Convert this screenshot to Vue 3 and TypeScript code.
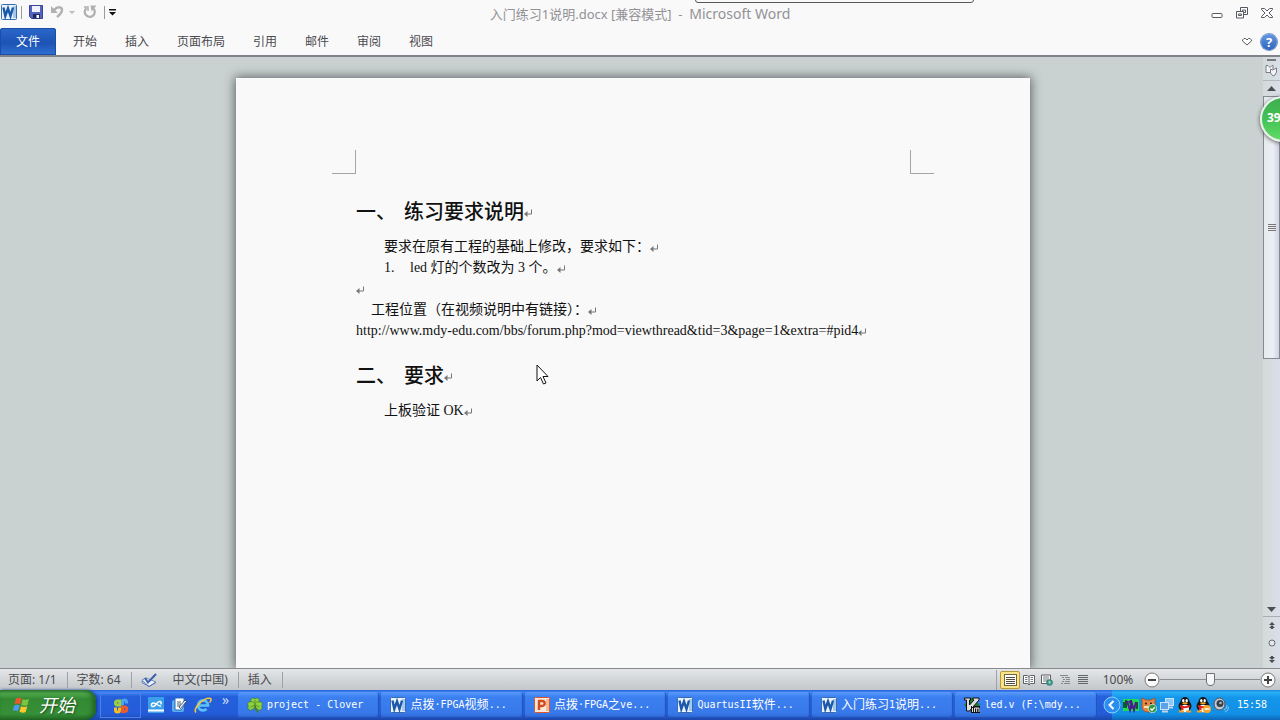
<script setup lang="ts">
interface Task {
  icon: 'clover' | 'word' | 'ppt' | 'vim'
  label: string
}
interface Run {
  text: string
  latin: boolean
}

const tabs: string[] = ['开始', '插入', '页面布局', '引用', '邮件', '审阅', '视图']

const tasks: Task[] = [
  { icon: 'clover', label: 'project - Clover' },
  { icon: 'word', label: '点拨·FPGA视频...' },
  { icon: 'ppt', label: '点拨·FPGA之ve...' },
  { icon: 'word', label: 'QuartusII软件...' },
  { icon: 'word', label: '入门练习1说明...' },
  { icon: 'vim', label: 'led.v (F:\\mdy...' },
]

// Splits a label into Latin and Chinese runs so each gets its own face and size.
function runs(label: string): Run[] {
  const parts = label.match(/[\x20-\xff]+|[^\x20-\xff]+/g) ?? []
  return parts.map((text) => ({ text, latin: text.charCodeAt(0) < 256 }))
}
</script>

<template>
  <div class="desktop">
    <svg class="defs" aria-hidden="true">
      <defs>
        <symbol id="i-return" viewBox="0 0 9 9">
          <path d="M7.5 0.5v4.5H2" fill="none" stroke="#777" />
          <path d="M0 5l3.5-3v6z" fill="#777" />
        </symbol>
        <symbol id="i-word" viewBox="0 0 16 16">
          <rect x="0.5" y="0.5" width="15" height="15" rx="1" fill="#e9f3fc" stroke="#3a6cae" />
          <rect x="12" y="2" width="3" height="12" fill="#a5c9ea" />
          <path d="M2.5 3.500l1.800 8.500 2.700-7.500 2.500 7.500 2.500-8.500" fill="none" stroke="#1c58ab" stroke-width="2.400" />
        </symbol>
        <symbol id="i-ppt" viewBox="0 0 16 16">
          <rect x="0.5" y="0.5" width="15" height="15" rx="1" fill="#fbe6da" stroke="#d9582a" />
          <rect x="12" y="2" width="3" height="12" fill="#f3b697" />
          <path d="M5 13V4h3.2a2.5 2.5 0 0 1 0 5H5" fill="none" stroke="#d24a1b" stroke-width="2.4" />
        </symbol>
        <symbol id="i-clover" viewBox="0 0 16 16">
          <g fill="#8fd040" stroke="#2d6a16" stroke-width="0.5">
            <path d="M8 8C5 8 3.500 7 4 4.500C3 2 6 -0.500 8 2C10 -0.500 13 2 12 4.500C12 7 10 8 8 8z" />
            <path d="M8 8C8 5 6 4.500 4 5C1.500 4 -0.500 7 1.500 9C-0.500 11.500 3 14.500 5 12.500C7 12 8 10 8 8z" />
            <path d="M8 8C8 5 10 4.500 12 5C14.500 4 16.500 7 14.500 9C16.500 11.500 13 14.500 11 12.500C9 12 8 10 8 8z" />
          </g>
          <path d="M8 8c0 3 .5 5 3 7.500" fill="none" stroke="#477f20" stroke-width="1.500" />
          <path d="M8 3v5L3.500 10M8 8l4.500 2" fill="none" stroke="#5c9a2a" />
        </symbol>
        <symbol id="i-vim" viewBox="0 0 16 16">
          <path d="M8 0l8 8-8 8-8-8z" fill="#1b7a36" />
          <path d="M0.500 1h6v2h-1v5l4.500-5h-1V1h6v2L5.500 14H2.500V3h-2z" fill="#dedede" stroke="#111" />
          <path d="M7 9h9v7H7z" fill="#111" />
          <path d="M8.500 11v4M10.500 15v-4h4.500v4M12.700 11v4" fill="none" stroke="#e6e6e6" />
          <path d="M8 9h1v1H8z" fill="#e6e6e6" />
        </symbol>
        <symbol id="i-penguin" viewBox="0 0 16 16">
          <ellipse cx="8" cy="9" rx="6.500" ry="6" fill="#161616" />
          <ellipse cx="8" cy="5" rx="4.500" ry="5" fill="#161616" />
          <ellipse cx="8" cy="11.500" rx="4" ry="3.800" fill="#fff" />
          <ellipse cx="6.300" cy="3.700" rx="1.200" ry="1.600" fill="#fff" />
          <ellipse cx="9.700" cy="3.700" rx="1.200" ry="1.600" fill="#fff" />
          <ellipse cx="8" cy="6.300" rx="2.800" ry="1" fill="#f6a21a" />
          <path d="M3 8c3 1.500 7 1.500 10 0v2c-3 1.500-7 1.500-10 0z" fill="#e2231a" />
          <path d="M4 9.500h2.500V13H4z" fill="#e2231a" />
          <path d="M2 14.500h5M9 14.500h5" stroke="#f6a21a" stroke-width="2" />
        </symbol>
      </defs>
    </svg>

    <header class="ribbon">
      <div class="titlebar">
        <div class="quick">
          <svg class="i16" aria-hidden="true"><use href="#i-word" /></svg>
          <span class="bar"></span>
          <button type="button" aria-label="保存">
            <svg viewBox="0 0 14 14" width="14" height="14">
              <path d="M0.500 0.500h13v13h-11l-2-2z" fill="#5463bd" stroke="#39479b" />
              <rect x="3" y="1" width="8" height="6" fill="#f0f3ff" />
              <rect x="4" y="9" width="7" height="4.500" fill="#20285f" />
              <rect x="7.500" y="10" width="2.500" height="3" fill="#fff" />
            </svg>
          </button>
          <button type="button" class="undo" aria-label="撤消">
            <svg viewBox="0 0 24 14" width="24" height="14">
              <path d="M3 5c4-4 8-3 8 0 0 3-3 5-5 7" fill="none" stroke="#b1b1b1" stroke-width="2.500" />
              <path d="M0 1v7h7z" fill="#b1b1b1" />
              <path d="M18 6h6l-3 3z" fill="#bbb" />
            </svg>
          </button>
          <button type="button" class="redo" aria-label="恢复">
            <svg viewBox="0 0 14 14" width="14" height="14">
              <path d="M3.500 3a5 5 0 1 0 7 0.500" fill="none" stroke="#b1b1b1" stroke-width="2.300" />
              <path d="M7.500 0.500h6l-5 6z" fill="#b1b1b1" />
              <path d="M1 2h4v4" fill="none" stroke="#b1b1b1" stroke-width="1.500" />
            </svg>
          </button>
          <span class="bar"></span>
          <button type="button" class="more" aria-label="自定义快速访问工具栏">
            <svg viewBox="0 0 7 7" width="7" height="7"><path d="M0 0h7v1.500H0zM0 3h7L3.500 6.500z" fill="#111" /></svg>
          </button>
        </div>
        <h1 class="title">入门练习1说明.docx [兼容模式] &nbsp;-&nbsp; <span class="app">Microsoft Word</span></h1>
        <div class="winctl">
          <button type="button" aria-label="最小化">
            <svg viewBox="0 0 12 12" width="12" height="12"><rect x="1" y="6.500" width="10" height="4" rx="1" fill="#fff" stroke="#555763" /></svg>
          </button>
          <button type="button" aria-label="还原">
            <svg viewBox="0 0 12 12" width="12" height="12" fill="#fff" stroke="#555763">
              <path d="M4.500 0.500h7v7h-7z" /><path d="M6.500 3h3v2.500h-3z" /><path d="M0.500 4.500h7v6.500h-7z" /><path d="M2.500 7h3v1.500h-3z" />
            </svg>
          </button>
          <button type="button" aria-label="关闭">
            <svg viewBox="0 0 12 12" width="12" height="12"><path d="M0.500 1.500h3L6 4l2.500-2.500h3v1L8 6l3.500 3.500v1h-3L6 8l-2.500 2.500h-3v-1L4 6 0.500 2.500z" fill="#fff" stroke="#555763" /></svg>
          </button>
        </div>
        <div class="edge"></div>
      </div>
      <nav class="tabs">
        <button type="button" class="file">文件</button>
        <button v-for="t in tabs" :key="t" type="button" class="tab">{{ t }}</button>
        <span class="grow"></span>
        <button type="button" class="fold" aria-label="展开功能区">
          <svg viewBox="0 0 10 8" width="10" height="8"><path d="M0.500 2L2 0.500h1.500L5 2l1.500-1.500H8L9.500 2v1L5 7 0.500 3z" fill="#fff" stroke="#555763" /></svg>
        </button>
        <button type="button" class="help" aria-label="帮助">?</button>
      </nav>
    </header>

    <main class="workspace">
      <div class="canvas">
        <article class="page">
          <div class="corners"><span class="corner left"></span><span class="corner right"></span></div>
          <div class="text">
            <h2>一、<span class="gap"></span>练习要求说明<svg class="ret"><use href="#i-return" /></svg></h2>
            <p class="in2">要求在原有工程的基础上修改，要求如下：<svg class="ret"><use href="#i-return" /></svg></p>
            <p class="in2"><span class="num">1.</span>led 灯的个数改为 3 个。<svg class="ret"><use href="#i-return" /></svg></p>
            <p><svg class="ret"><use href="#i-return" /></svg></p>
            <p class="in1">工程位置（在视频说明中有链接）：<svg class="ret"><use href="#i-return" /></svg></p>
            <p>http://www.mdy-edu.com/bbs/forum.php?mod=viewthread&amp;tid=3&amp;page=1&amp;extra=#pid4<svg class="ret"><use href="#i-return" /></svg></p>
            <h2>二、<span class="gap"></span>要求<svg class="ret"><use href="#i-return" /></svg></h2>
            <p class="in2">上板验证 OK<svg class="ret"><use href="#i-return" /></svg></p>
          </div>
        </article>
      </div>

      <div class="scroll">
        <span class="split"></span>
        <button type="button" class="ruler" aria-label="标尺">
          <svg viewBox="0 0 13 13" width="13" height="13" fill="#f4f4f8" stroke="#7b7e88"><path d="M1 1.500h2l2 2 2-2h1v7H1z" /><path d="M5.500 5l2 1 4-2v4l-1.500 3-2 1-2.500-3z" /></svg>
        </button>
        <button type="button" class="arrow up" aria-label="向上滚动"><svg viewBox="0 0 9 5" width="9" height="5"><path d="M0 5l4.500-5L9 5z" fill="#4c4e57" /></svg></button>
        <div class="track">
          <div class="thumb"><i></i><i></i><i></i><i></i></div>
        </div>
        <button type="button" class="arrow down" aria-label="向下滚动"><svg viewBox="0 0 9 5" width="9" height="5"><path d="M0 0h9L4.500 5z" fill="#4c4e57" /></svg></button>
        <button type="button" class="jump" aria-label="前一页"><svg viewBox="0 0 6 7" width="6" height="7"><path d="M3 0l3 3H0zM3 3l3 3H0zM2 6h2v1H2z" fill="#4c4e57" /></svg></button>
        <button type="button" class="jump" aria-label="选择浏览对象"><svg viewBox="0 0 8 8" width="8" height="8"><circle cx="4" cy="4" r="3" fill="#e6e6ec" stroke="#6a6c74" /></svg></button>
        <button type="button" class="jump" aria-label="下一页"><svg viewBox="0 0 6 7" width="6" height="7"><path d="M2 0h2v1H2zM0 1h6L3 4zM0 4h6L3 7z" fill="#4c4e57" /></svg></button>
      </div>
      <div class="badge">39</div>
      <svg class="pointer" viewBox="0 0 13 21" width="13" height="21" aria-hidden="true">
        <path d="M1 1v16l3.500-3.500L7.500 20l2.500-1-3-6.500h5z" fill="#fff" stroke="#111" />
      </svg>
    </main>

    <footer class="status">
      <span class="cell first">页面: 1/1</span>
      <span class="cell">字数: 64</span>
      <span class="cell proof">
        <svg viewBox="0 0 16 14" width="16" height="14" aria-hidden="true">
          <path d="M1 7l4-2 10 4-7 4.500z" fill="#eef2fb" stroke="#6f88bd" />
          <path d="M1 8v1.500l7 4 7-4" fill="none" stroke="#5876b4" />
          <path d="M4 5l3 4.500L15 1" fill="none" stroke="#3c61ab" stroke-width="2" />
        </svg>
        中文(中国)
      </span>
      <span class="cell">插入</span>
      <span class="grow"></span>
      <div class="views">
        <button type="button" class="on" aria-label="页面视图">
          <svg viewBox="0 0 13 12" width="13" height="12"><rect x="0.500" y="0.500" width="12" height="11" fill="#fff" stroke="#6d6541" /><path d="M2 3.500h9M2 5.500h9M2 7.500h9M2 9.500h9" stroke="#554f3a" /></svg>
        </button>
        <button type="button" aria-label="阅读版式">
          <svg viewBox="0 0 12 12" width="12" height="12"><path d="M0.500 1.500h4L6 2.500l1.500-1h4v8h-4L6 11l-1.500-1.500h-4zM6 2.500v8" fill="#fff" stroke="#5b5f66" /><path d="M2 3.500h2.500M2 5.500h2.500M2 7.500h2.500M7.500 3.500H10M7.500 5.500H10M7.500 7.500H10" stroke="#777" /></svg>
        </button>
        <button type="button" aria-label="Web 版式">
          <svg viewBox="0 0 12 12" width="12" height="12"><path d="M0.500 1h9v8.500h-9z" fill="#fff" stroke="#5b5f66" /><path d="M2 3h6M2 5h6M2 7h4" stroke="#777" /><circle cx="8.500" cy="8.500" r="3.300" fill="#3a8a88" /><path d="M7 7.500l2-1 1 2-1.500 2z" fill="#8fd0a4" /></svg>
        </button>
        <button type="button" aria-label="大纲视图">
          <svg viewBox="0 0 12 12" width="12" height="12"><path d="M1 1.500h8M3 3.500h2M6 3.500h5M4 5.500h2M7 5.500h4M3 7.500h2M6 7.500h5M2 9.500h2M5 9.500h6" stroke="#85878c" /></svg>
        </button>
        <button type="button" aria-label="草稿">
          <svg viewBox="0 0 12 12" width="12" height="12"><path d="M1 1.500h10M1 3.500h10M1 5.500h10M1 7.500h10M1 9.500h10" stroke="#63656a" /></svg>
        </button>
      </div>
      <button type="button" class="percent">100%</button>
      <button type="button" class="round" aria-label="缩小"><svg viewBox="0 0 16 16" width="16" height="16"><circle cx="8" cy="8" r="7" fill="#fafafa" stroke="#77797e" /><path d="M4 8h8" stroke="#444" stroke-width="2" /></svg></button>
      <input class="zoom" type="range" min="0" max="100" value="50" aria-label="显示比例" />
      <button type="button" class="round" aria-label="放大"><svg viewBox="0 0 16 16" width="16" height="16"><circle cx="8" cy="8" r="7" fill="#fafafa" stroke="#77797e" /><path d="M4 8h8M8 4v8" stroke="#444" stroke-width="2" /></svg></button>
    </footer>

    <div class="taskbar">
      <button type="button" class="start">
        <svg viewBox="0 0 18 18" width="18" height="18" aria-hidden="true">
          <path d="M3 2.500c2-1.300 4-1 5.500 0L7 8.300c-2-1-4-1-5.500 0z" fill="#f0562b" />
          <path d="M9.700 3c2 1 4 1 6.300 0l-1.500 6c-2 1-4 .8-6.300-.2z" fill="#7cc342" />
          <path d="M1.200 9.500c2-1.200 4-1 5.500 0L5 15.300c-2-1-4-1-5.500 0z" fill="#4b9bf0" />
          <path d="M8 10.200c2 1 4 1 6.200 0l-1.500 5.800c-2 1-4 .8-6.200-.2z" fill="#fbc72c" />
        </svg>
        <span>开始</span>
      </button>
      <div class="pinned">
        <button type="button" aria-label="Office">
          <svg viewBox="0 0 16 16" width="16" height="16" fill="none" stroke-width="3">
            <path d="M7 3H4.500a2 2 0 0 0 0 4H7z" stroke="#9bd13f" /><path d="M9.500 7V4a2 2 0 0 1 4 0v1.500" stroke="#4aa4f2" />
            <path d="M2.500 9.500V12a2 2 0 0 0 4 0V9.500" stroke="#f8bd28" /><path d="M9.500 9h2a2 2 0 0 1 0 4.500h-2z" stroke="#ed5a2b" />
          </svg>
        </button>
      </div>
      <div class="launch">
        <button type="button" aria-label="云盘"><svg viewBox="0 0 16 16" width="16" height="16"><rect width="16" height="16" fill="#3aa0ea" /><path d="M0 13.500h16" stroke="#fff" stroke-width="2" /><path d="M13 9c-3 1-5-4-8-3-2.500.8-2 4 .5 3.500C8 9 9 4 12 4.500c1.500.5 1.500 2 .5 2.500" fill="none" stroke="#fff" stroke-width="1.500" /></svg></button>
        <button type="button" aria-label="显示桌面"><svg viewBox="0 0 16 16" width="16" height="16"><rect x="1" y="3" width="12" height="12" rx="2" fill="#58aef0" /><path d="M4 1h9v8l-3 4H4z" fill="#fff" stroke="#2b6cb8" /><path d="M6 5h4M6 7h4M6 9h3" stroke="#467" /><path d="M8 10l6-7 1.500 1.500-6 7z" fill="#e8f2ff" stroke="#235" stroke-width="0.800" /></svg></button>
        <button type="button" aria-label="Internet Explorer"><svg viewBox="0 0 18 16" width="18" height="16"><path d="M4.500 8.500h9.500a5 5 0 1 0-1.500 3.500" fill="none" stroke="#5ac3f7" stroke-width="2.600" /><path d="M2 15.500C-2 12 10 0 16.500 1.500c1.500.8 0 3-1 4" fill="none" stroke="#f6c73d" stroke-width="1.500" /></svg></button>
        <span class="chev">»</span>
      </div>
      <div class="tasks">
        <button v-for="t in tasks" :key="t.label" type="button" class="task">
          <svg class="i16" aria-hidden="true"><use :href="'#i-' + t.icon" /></svg>
          <span class="label"><span v-for="(r, i) in runs(t.label)" :key="i" :class="{ latin: r.latin }">{{ r.text }}</span></span>
        </button>
      </div>
      <div class="tray">
        <button type="button" class="expand" aria-label="显示隐藏的图标"><svg viewBox="0 0 18 18" width="18" height="18"><circle cx="9" cy="9" r="8" fill="#2a8df0" stroke="#8fd0fb" /><path d="M10.500 5L6.500 9l4 4" fill="none" stroke="#fff" stroke-width="2" /></svg></button>
        <svg viewBox="0 0 16 16" aria-hidden="true"><rect y="2" width="16" height="12" fill="#1edb4f" /><path d="M1 5v6M3 3v8M14 5v7" stroke="#0a3020" stroke-width="1.500" /><path d="M4 4l3 9 2-6 2 6 2-8M6 4l3 4M8 3v9" fill="none" stroke="#4b1c91" stroke-width="2" /></svg>
        <svg viewBox="0 0 16 16" aria-hidden="true"><path d="M1 1l4 2h5l4-2v9c0 3-3 5-6.500 5S1 13 1 10z" fill="#e88744" stroke="#a34a1b" stroke-width="0.800" /><circle cx="5" cy="6.500" r="1" fill="#311" /><circle cx="10" cy="6.500" r="1" fill="#311" /><path d="M3 10h6" stroke="#ffe1b8" stroke-width="2" /><circle cx="11.500" cy="11.500" r="4.200" fill="#2f9a42" stroke="#fff" stroke-width="0.600" /><path d="M9.500 11.500l1.500 1.700 2.700-3" fill="none" stroke="#fff" stroke-width="1.400" /></svg>
        <svg viewBox="0 0 16 16" aria-hidden="true"><rect x="6.500" y="1.500" width="8" height="7" fill="#8cc8fa" stroke="#cfe3f6" /><path d="M9 10.500h5" stroke="#c4d4e6" stroke-width="2" /><rect x="1.500" y="5.500" width="8" height="7" fill="#5ea2ea" stroke="#cfe3f6" /><path d="M3 14.500h6" stroke="#c4d4e6" stroke-width="2" /></svg>
        <svg aria-hidden="true"><use href="#i-penguin" /></svg>
        <svg viewBox="0 0 16 16" aria-hidden="true"><use href="#i-penguin" width="16" height="16" /><circle cx="12" cy="12" r="4" fill="#f5a52e" /><path d="M9.500 12h5" stroke="#fff" stroke-width="1.500" /></svg>
        <svg viewBox="0 0 16 16" aria-hidden="true"><ellipse cx="6.500" cy="7" rx="5.500" ry="6" fill="#c2c8ce" stroke="#49535f" /><circle cx="7" cy="6.500" r="3.500" fill="#36404c" /><circle cx="7.500" cy="6" r="1.300" fill="#aeb7c1" /><path d="M11 13c2-1 3-2.500 3-5M12 15c2.500-1 3.500-3 3.500-5" fill="none" stroke="#9ec9ee" /></svg>
        <time>15:58</time>
      </div>
    </div>
  </div>
</template>

<style>
html,
body {
  margin: 0;
  height: 100%;
  overflow: hidden;
}
</style>

<style scoped>
.desktop {
  display: grid;
  grid-template-rows: auto minmax(0, 1fr) auto auto;
  height: 100vh;
  font: 12px/16px 'Noto Sans', 'Noto Sans CJK SC', sans-serif;
  color: #4a4a4e;
  background: #c9d2d0;
}
.defs {
  position: absolute;
  width: 0;
  height: 0;
}
svg {
  display: block;
  flex: none;
}
button {
  display: flex;
  align-items: center;
  justify-content: center;
  flex: none;
  margin: 0;
  padding: 0;
  border: 0;
  background: none;
  font: inherit;
  color: inherit;
}
.i16 {
  width: 16px;
  height: 16px;
}
.grow {
  flex: 1;
}

.ribbon {
  background: #f9f9fa;
  border-bottom: 2px solid #808389;
}
.titlebar {
  position: relative;
  display: grid;
  grid-template-columns: 1fr auto 1fr;
  align-items: center;
  height: 28px;
}
.quick {
  display: flex;
  align-items: center;
  height: 22px;
  padding: 0 0 4px 1px;
  gap: 4px;
}
.bar {
  width: 1px;
  height: 13px;
  background: #9a9ba0;
}
.quick .bar:nth-child(2) {
  margin-right: 3px;
}
.undo {
  margin-left: 4px;
}
.redo {
  margin: 0 3px 0 4px;
}
.title {
  margin: 0;
  font-size: 13px;
  line-height: 20px;
  font-weight: 400;
  color: #929295;
}
.app {
  font-size: 14px;
}
.winctl {
  display: flex;
  justify-content: flex-end;
  gap: 13px;
  padding: 0 7px 2px 0;
}
.edge {
  position: absolute;
  top: -4px;
  left: 54.300%;
  width: 277px;
  height: 5px;
  border: 1px solid #55585c;
  border-radius: 3px;
}
.tabs {
  display: flex;
  height: 27px;
}
.file {
  width: 56px;
  margin-right: 3px;
  border-radius: 3px 3px 0 0;
  color: #fff;
  background: linear-gradient(#2b68ca, #1c53b4 55%, #2e70d4);
  box-shadow: inset 0 0 0 1px #1c4ca8;
}
.tab {
  padding: 0 14px;
}
.fold {
  width: 10px;
}
.help {
  align-self: center;
  width: 16px;
  height: 16px;
  margin: 0 3px 0 9px;
  border-radius: 8px;
  background: linear-gradient(#6396e0, #2f66bd);
  box-shadow: 0 0 0 1px #7094cc;
  color: #fff;
  font-size: 13px;
  font-weight: 700;
}

.workspace {
  position: relative;
  display: flex;
  min-height: 0;
  overflow: hidden;
}
.canvas {
  flex: 1;
  display: flex;
  justify-content: center;
  padding: 21px 0 0 3px;
  background: #c9d2d0;
}
.page {
  width: 794px;
  background: #f9f9f9;
  box-shadow: 0 0 10px 1px rgba(55, 58, 66, 0.75);
}
.corners {
  display: flex;
  justify-content: space-between;
  padding: 72px 96px 0;
}
.corner {
  width: 23px;
  height: 23px;
  border: 0 solid #a5a5a5;
  border-bottom-width: 1px;
}
.corner.left {
  border-right-width: 1px;
}
.corner.right {
  border-left-width: 1px;
}
.text {
  padding: 1px 120px 0;
  font: 14px/21px 'Liberation Serif', 'Noto Sans CJK SC', serif;
  color: #111;
}
.text h2 {
  display: flex;
  align-items: center;
  margin: 22px 0 9px;
  font-size: 20px;
  line-height: 30px;
  font-weight: 500;
}
.text p {
  display: flex;
  align-items: center;
  min-height: 21px;
  margin: 0;
  white-space: pre;
}
.text p + h2 {
  margin-top: 20px;
}
.gap {
  width: 8px;
}
.text .in1 {
  padding-left: 15px;
}
.text .in2 {
  padding-left: 28px;
}
.num {
  width: 26px;
}
.ret {
  width: 9px;
  height: 9px;
  margin-top: 3px;
}

.scroll {
  display: flex;
  flex-direction: column;
  align-items: stretch;
  width: 17px;
  background: linear-gradient(90deg, #d3dad9, #d9dfe9);
}
.split {
  align-self: center;
  width: 9px;
  height: 2px;
  margin-top: 2px;
  background: #777a82;
}
.ruler {
  height: 20px;
  border-bottom: 1px solid #b4b8bf;
}
.arrow {
  height: 15px;
}
.track {
  flex: 1;
}
.thumb {
  box-sizing: border-box;
  display: flex;
  flex-direction: column;
  align-items: center;
  justify-content: center;
  gap: 1px;
  height: 52%;
  border: 1px solid #858993;
  background: linear-gradient(90deg, #e6ebeb, #eceff6 60%, #cfd1e2);
}
.thumb i {
  width: 8px;
  height: 1px;
  background: #777;
}
.down {
  border-bottom: 1px solid #a9acb3;
}
.jump {
  height: 17px;
}
.badge {
  position: absolute;
  top: 39px;
  right: -26px;
  box-sizing: border-box;
  width: 46px;
  height: 46px;
  padding-left: 5px;
  border: 2px solid #e8f2ea;
  border-radius: 23px;
  background: linear-gradient(#3fae50, #43c155 50%, #62dc66);
  box-shadow: 0 1px 4px #555;
  color: #fff;
  font-size: 12px;
  line-height: 40px;
  font-weight: 700;
}
.pointer {
  position: absolute;
  left: 536px;
  top: 307px;
}

.status {
  display: flex;
  align-items: center;
  height: 21px;
  border-top: 1px solid #878b90;
  background: linear-gradient(#e4e6e8, #c3c7ca);
}
.cell {
  display: flex;
  align-items: center;
  height: 16px;
  padding: 0 10px 0 9px;
  border-right: 1px solid #9da0a5;
}
.first {
  padding-left: 8px;
}
.proof {
  gap: 16px;
}
.views {
  display: flex;
  align-items: center;
  height: 20px;
  padding-left: 3px;
  border-left: 1px solid #9da0a5;
}
.views button {
  width: 18px;
  height: 18px;
}
.views .on {
  box-sizing: border-box;
  width: 20px;
  border: 1px solid #b9993c;
  border-radius: 2px;
  background: #fbe38a;
}
.percent {
  width: 52px;
}
.round {
  width: 16px;
}
.zoom {
  appearance: none;
  width: 100px;
  height: 16px;
  margin: 0;
  background: linear-gradient(#8a8d92, #8a8d92) center / 100% 1px no-repeat;
}
.zoom::-webkit-slider-thumb {
  appearance: none;
  width: 9px;
  height: 13px;
  border: 1px solid #6e7177;
  border-radius: 1px 1px 5px 5px;
  background: #f6f6f8;
}
.round:last-child {
  margin-right: 4px;
}

.taskbar {
  display: flex;
  height: 30px;
  color: #fff;
  background: linear-gradient(#2b62dc, #3f85f4 8%, #2560dc 22%, #245bd8 80%, #1c46ad);
}
.start {
  gap: 8px;
  width: 96px;
  padding-right: 8px;
  box-sizing: border-box;
  border-radius: 0 10px 10px 0;
  background: linear-gradient(#3a8a3b, #4fa84c 12%, #338a33 30%, #369037 80%, #236a25);
  box-shadow: inset -3px 0 5px #1f6023, 1px 0 3px #123b90;
  font-size: 18px;
  line-height: 26px;
  font-style: italic;
  text-shadow: 1px 1px 2px #1b4a1c;
}
.pinned {
  display: flex;
  align-items: center;
  justify-content: center;
  width: 39px;
  margin: 3px 0 2px 4px;
  border: 1px solid #4a80e8;
}
.launch {
  display: flex;
  align-items: center;
  gap: 7px;
  flex: none;
  width: 90px;
  padding-left: 7px;
  box-sizing: border-box;
}
.chev {
  align-self: flex-start;
  margin-left: 3px;
  font-size: 14px;
  line-height: 20px;
  color: #c7dcff;
}
.tasks {
  flex: 1;
  display: flex;
  gap: 2px;
  padding: 2px 2px 2px 7px;
  min-width: 0;
}
.task {
  flex: 1 1 0;
  min-width: 0;
  justify-content: flex-start;
  gap: 4px;
  padding-left: 9px;
  border-radius: 3px;
  background: linear-gradient(#5a9bf9, #3b7ff0 20%, #3879ea 80%, #2c66d2);
  box-shadow: inset -1px -1px 1px #2451b4;
}
.label {
  display: flex;
  align-items: center;
  white-space: pre;
}
.latin {
  font: 10px/16px 'DejaVu Sans Mono', monospace;
}
.tray {
  display: flex;
  align-items: center;
  gap: 2px;
  padding-right: 13px;
  margin-left: 13px;
  background: linear-gradient(#1a86dc, #29b0f6 8%, #1496ea 25%, #1290e6 80%, #0d66b8);
}
.tray > svg {
  width: 16px;
  height: 16px;
}
.expand {
  margin-left: -9px;
}
.tray time {
  margin-left: 6px;
  font: 10px/16px 'DejaVu Sans Mono', monospace;
}
</style>
